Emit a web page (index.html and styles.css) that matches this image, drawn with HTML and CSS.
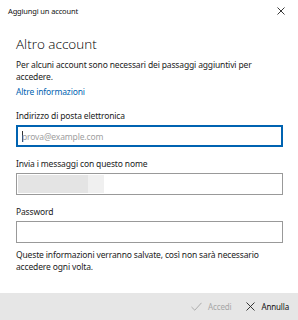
FILE: index.html
```html
<!DOCTYPE html>
<html lang="it">
<head>
<meta charset="utf-8">
<link rel="stylesheet" href="styles.css">
</head>
<body>
<div class="window">
  <div class="titlebar">
    <span class="title">Aggiungi un account</span>
    <svg class="close" width="8" height="8" viewBox="0 0 8 8"><path d="M0.5 0.5L7.5 7.5M7.5 0.5L0.5 7.5" stroke="#222" stroke-width="0.9" fill="none"/></svg>
  </div>
  <div class="content">
    <h1 class="heading">Altro account</h1>
    <p class="intro">Per alcuni account sono necessari dei passaggi aggiuntivi per accedere.</p>
    <a class="link" href="#">Altre informazioni</a>
    <div class="field">
      <label class="label">Indirizzo di posta elettronica</label>
      <div class="input focused"><span class="caret"></span><span class="placeholder">prova@example.com</span></div>
    </div>
    <div class="field">
      <label class="label">Invia i messaggi con questo nome</label>
      <div class="input"><span class="blur1"></span><span class="blur2"></span></div>
    </div>
    <div class="field">
      <label class="label">Password</label>
      <div class="input"></div>
    </div>
    <p class="note">Queste informazioni verranno salvate, così non sarà necessario accedere ogni volta.</p>
  </div>
  <div class="footer">
    <span class="btn disabled"><svg width="11" height="9" viewBox="0 0 11 9"><path d="M0.5 5L3.8 8.2L10.5 0.8" stroke="#a6a6a6" stroke-width="0.9" fill="none"/></svg>Accedi</span>
    <span class="btn"><svg width="9" height="9" viewBox="0 0 9 9"><path d="M0.5 0.5L8.5 8.5M8.5 0.5L0.5 8.5" stroke="#222" stroke-width="0.9" fill="none"/></svg>Annulla</span>
  </div>
</div>
</body>
</html>
```
FILE: styles.css
```css
html, body {
  margin: 0;
  padding: 0;
  background: #fff;
}
body {
  font-family: "Noto Sans", "Open Sans", sans-serif;
  color: #1a1a1a;
  letter-spacing: -0.15px;
}
.window {
  width: 298px;
  height: 320px;
  display: flex;
  flex-direction: column;
  overflow: hidden;
}
.titlebar {
  height: 22px;
  display: flex;
  align-items: center;
  justify-content: space-between;
  padding: 0 13px 0 8px;
}
.title {
  font-size: 7.5px;
  color: #111;
}
.close {
  display: block;
}
.content {
  padding: 0 15px 0 16px;
  display: flex;
  flex-direction: column;
}
.heading {
  margin: 13px 0 0 0;
  font-family: "Open Sans", "Noto Sans", sans-serif;
  font-size: 13.5px;
  font-weight: 300;
  letter-spacing: 0;
  line-height: 18px;
  color: #000;
}
.intro {
  margin: 6px 0 0 0;
  font-size: 8.5px;
  line-height: 12px;
  color: #222;
}
.link {
  margin-top: 3px;
  font-size: 8.5px;
  line-height: 12px;
  color: #0063b1;
  text-decoration: none;
}
.field {
  margin-top: 12px;
  display: flex;
  flex-direction: column;
}
.field + .field {
  margin-top: 11px;
}
.label {
  font-size: 8.5px;
  line-height: 12px;
  color: #222;
  margin-bottom: 3px;
}
.input {
  box-sizing: border-box;
  height: 22px;
  border: 1.5px solid #999;
  display: flex;
  align-items: center;
  padding: 1px;
}
.input.focused {
  border: 2px solid #0063b1;
  padding: 0 4px;
}
.caret {
  width: 1px;
  height: 11px;
  background: #333;
  margin-right: -1px;
}
.placeholder {
  font-size: 8.5px;
  color: #a0a0a0;
}
.blur1 {
  width: 70px;
  height: 100%;
  background: #e4e4e4;
}
.blur2 {
  width: 16px;
  height: 100%;
  background: #f0f0f0;
}
.note {
  margin: 6px 0 0 0;
  font-size: 8.5px;
  line-height: 12px;
  color: #222;
}
.footer {
  margin-top: auto;
  height: 27px;
  background: #e6e6e6;
  display: flex;
  align-items: center;
  justify-content: flex-end;
  gap: 15px;
  padding-right: 9px;
}
.btn {
  display: flex;
  align-items: center;
  gap: 6px;
  font-size: 8px;
  color: #111;
}
.btn.disabled {
  color: #a6a6a6;
}
```
